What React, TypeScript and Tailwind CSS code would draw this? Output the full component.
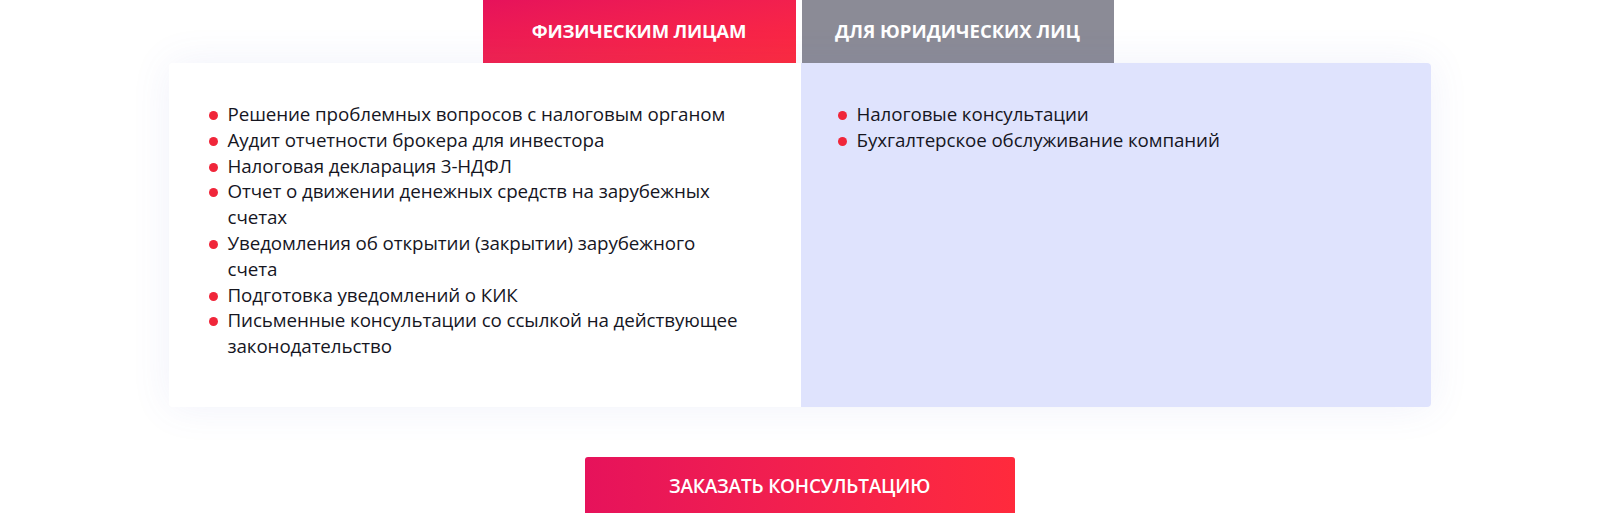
import React from "react";

const individual: React.ReactNode[] = [
  "Решение проблемных вопросов с налоговым органом",
  "Аудит отчетности брокера для инвестора",
  "Налоговая декларация 3-НДФЛ",
  <>Отчет о движении денежных средств на зарубежных<br />счетах</>,
  <>Уведомления об открытии (закрытии) зарубежного<br />счета</>,
  "Подготовка уведомлений о КИК",
  <>Письменные консультации со ссылкой на действующее<br />законодательство</>,
];

const legal: React.ReactNode[] = [
  "Налоговые консультации",
  "Бухгалтерское обслуживание компаний",
];

function ServiceList({ items }: { items: React.ReactNode[] }) {
  return (
    <ul className="flex flex-col">
      {items.map((item, i) => (
        <li key={i} className="flex items-start text-[18.8px] leading-[25.8px] text-[#16161f]">
          <span className="mt-[9px] mr-[10px] h-[9px] w-[9px] shrink-0 rounded-full bg-[#f0263a]" />
          <span className="whitespace-nowrap tracking-[-0.1px]">{item}</span>
        </li>
      ))}
    </ul>
  );
}

export default function App() {
  return (
    <div
      className="flex min-h-[513px] w-full flex-col items-center overflow-hidden bg-white pr-[1px]"
      style={{ fontFamily: '"Open Sans", "Noto Sans", sans-serif' }}
    >
      <div className="mr-[3px] flex gap-[6px]">
        <button className="flex h-[63px] w-[313px] items-center justify-center bg-gradient-to-br from-[#e6125b] to-[#ff2a3c] pb-[2px] text-[18.5px] font-bold uppercase tracking-[-0.2px] text-white">
          Физическим лицам
        </button>
        <button className="flex h-[63px] w-[312px] items-center justify-center bg-[#8b8b96] pb-[2px] text-[18.5px] font-bold uppercase tracking-[0px] text-white">
          Для юридических лиц
        </button>
      </div>

      <div className="flex h-[344px] w-[1262px] rounded-[4px] shadow-[0_0_40px_rgba(90,100,200,0.09)]">
        <div className="w-[632px] rounded-l-[4px] bg-white pl-[40px] pt-[39px]">
          <ServiceList items={individual} />
        </div>
        <div className="flex-1 rounded-r-[4px] bg-[#dfe3fd] pl-[37px] pt-[39px]">
          <ServiceList items={legal} />
        </div>
      </div>

      <button className="mt-[50px] flex h-[62px] w-[430px] shrink-0 items-start justify-center rounded-[3px] bg-gradient-to-r from-[#e6125b] to-[#ff2a3c] pt-[15px] text-[19px] font-semibold uppercase tracking-[-0.2px] text-white">
        Заказать консультацию
      </button>
    </div>
  );
}
